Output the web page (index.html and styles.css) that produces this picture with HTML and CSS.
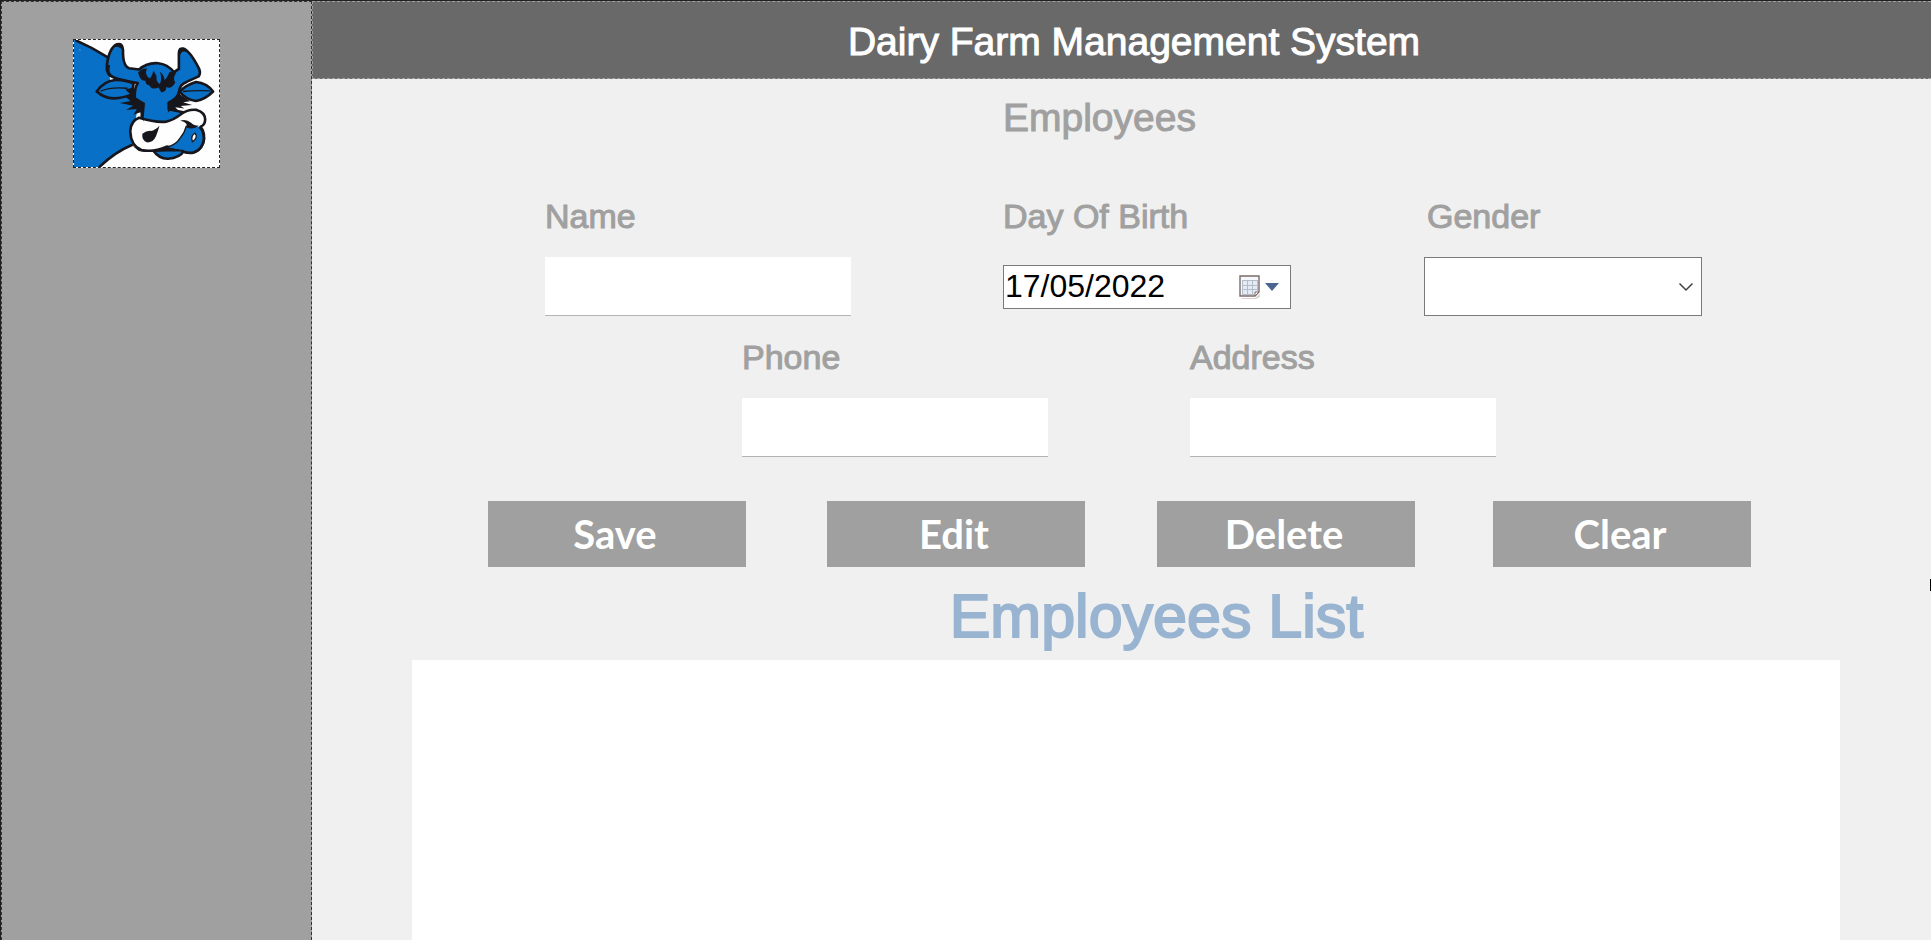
FILE: index.html
```html
<!DOCTYPE html>
<html lang="en">
<head>
<meta charset="utf-8">
<title>Dairy Farm Management System</title>
<link rel="stylesheet" href="styles.css">
</head>
<body>
<div class="app">
  <aside class="sidebar">
    <div class="logo">
      <svg class="logo-art" viewBox="39 27 441 387" preserveAspectRatio="none" role="img" aria-label="Blue cow logo">
        <rect x="39" y="27" width="441" height="387" fill="#fefefe"/>
        <path d="M39 27 L52 30 L140 78 L150 160 L235 215 L215 347 Q170 365 120 414 L39 414Z" fill="#0870c6"/>
        <g stroke="#17161c" stroke-width="8" stroke-linejoin="round" stroke-linecap="round">
          <path d="M46 29 Q95 50 142 80 M215 347 Q165 368 118 412" fill="none"/>
          <path d="M280 364 Q320 362 376 362 Q360 388 325 389 Q298 390 280 364Z" fill="#0870c6"/>
          <path d="M244 280 L247 222 L224 205 Q222 175 233 158 Q185 150 160 141 Q135 132 139 103 Q146 50 170 40 Q187 35 188 57 Q187 108 207 113 L237 117 Q262 95 295 98 Q323 101 343 125 L358 115 Q358 90 358 66 Q359 51 371 53 Q392 60 420 116 Q425 128 418 138 L383 154 Q360 162 359 184 Q355 205 327 218 L327 238 L385 250 Q350 272 310 280Z" fill="#0870c6"/>
          <path d="M108 184 Q130 152 164 149 Q195 148 220 160 L216 192 Q190 204 160 205 Q130 204 108 184Z" fill="#0870c6"/>
          <path d="M360 184 Q380 164 410 155 Q443 158 462 184 Q438 208 410 213 Q380 210 360 184Z" fill="#0870c6"/>
          <path d="M210 305 Q212 273 237 264 Q285 279 319 276 Q341 271 363 254 Q386 237 412 240 Q438 247 438 270 Q437 286 424 291 Q440 313 432 341 Q423 366 398 371 Q377 373 361 360 L321 352 Q280 370 244 362 Q212 350 210 305Z" fill="#fefefe"/>
        </g>
        <path d="M381 288 Q376 309 361 327 Q350 346 322 354 Q352 360 366 364 Q383 374 404 369 Q430 360 434 329 Q434 302 420 292 Q407 286 391 295Z" fill="#0870c6"/>
        <path d="M381 288 Q376 309 361 327 Q350 346 322 354" fill="none" stroke="#17161c" stroke-width="4"/>
        <path d="M366 364 Q383 374 404 369 Q430 360 434 329 Q434 302 420 292" fill="none" stroke="#17161c" stroke-width="8"/>
        <path d="M120 183 Q150 169 202 174 M370 184 Q405 180 454 182" fill="none" stroke="#17161c" stroke-width="4"/>
        <g fill="#17161c">
          <path d="M137 100 L149 105 Q143 124 154 135 L177 145 L146 139 Q135 125 137 100Z"/>
          <path d="M157 51 Q171 35 188 45 L190 62 Q174 40 157 51Z"/>
          <path d="M359 52 Q374 49 381 64 Q366 57 361 75Z"/>
          <path d="M234 126 Q246 113 261 114 Q252 135 270 144 Q278 134 281 121 L290 137 Q288 155 300 161 Q307 148 301 124 Q313 134 314 149 Q322 143 329 125 Q343 118 350 127 Q338 143 347 157 Q334 178 320 170 Q320 184 305 187 L296 172 Q276 181 267 164 Q255 163 257 151 Q240 154 234 126Z"/>
          <path d="M195 178 L222 171 L224 201 L255 219 L250 276 L241 247 L220 255 L230 237 L197 240 L219 227 L178 219 L211 213 L195 200 L212 194Z"/>
          <path d="M353 184 L365 195 L392 214 L371 217 L398 225 L363 228 L375 236 L347 232 L358 244 L336 237 L324 249 L330 214 Q355 207 353 184Z"/>
          <path d="M247 313 Q259 303 273 304 Q286 302 299 288 Q295 303 288 321 Q280 339 262 339 Q244 334 247 313Z"/>
          <path d="M362 273 Q380 267 395 279 Q403 288 419 288 Q400 302 381 294 Q387 277 362 273Z"/>
          <path d="M211 345 Q234 364 265 363 Q301 363 322 353 Q350 361 372 362 L340 366 L322 360 Q270 374 236 365Z"/>
        </g>
        <path d="M399 337 Q393 319 407 311 Q418 324 399 337Z" fill="#fefefe" stroke="#17161c" stroke-width="4"/>
        <circle cx="57" cy="57" r="2" fill="#83c3ef"/>
      </svg>
    </div>
  </aside>

  <div class="content">
    <header class="topbar">
      <h1 class="app-title">Dairy Farm Management System</h1>
    </header>

    <main class="page">
      <form class="employee-form">
        <div class="columns heading-row">
          <h2 class="page-title">Employees</h2>
        </div>
        <div class="columns">
          <div class="field">
            <label for="name">Name</label>
            <input class="text-box" id="name" type="text">
          </div>
          <div class="field field-date">
            <label for="birth">Day Of Birth</label>
            <div class="control-line">
              <div class="date-box">
                <input class="date-text" id="birth" type="text" value="17/05/2022">
                <button class="date-button" type="button" aria-label="Open calendar">
                  <svg width="42" height="26" viewBox="0 0 42 26" aria-hidden="true">
                    <path d="M3 24 H17 L22 20 V23 L18 25 H4Z" fill="#d9d2d0"/>
                    <path d="M2 2 H21 V18 L17 22 H2Z" fill="#f4f7fc" stroke="#7b6c69" stroke-width="1.4"/>
                    <rect x="4" y="6" width="15" height="14" fill="#e4ebf5"/>
                    <path d="M4 6.500 H19 M4 11.500 H19 M4 15.500 H19 M4 20.500 H16 M4.500 6 V20 M9.500 6 V20 M14.500 6 V20 M19.500 6 V17" fill="none" stroke="#b4bdca"/>
                    <path d="M17 22 V18 H21Z" fill="#fff" stroke="#7b6c69"/>
                    <path d="M27 9 H41 L34 17Z" fill="#4a6590"/>
                  </svg>
                </button>
              </div>
            </div>
          </div>
          <div class="field field-gender">
            <label for="gender">Gender</label>
            <div class="select-wrap">
              <select class="select-box" id="gender"><option></option></select>
              <svg class="chevron" width="16" height="10" viewBox="0 0 16 10" aria-hidden="true"><path d="M1.500 1.500 L8 8 L14.500 1.500" fill="none" stroke="#404040" stroke-width="1.500"/></svg>
            </div>
          </div>
        </div>

        <div class="contact-row">
          <div class="field">
            <label for="phone">Phone</label>
            <input class="text-box" id="phone" type="text">
          </div>
          <div class="field">
            <label for="address">Address</label>
            <input class="text-box" id="address" type="text">
          </div>
        </div>

        <div class="actions">
          <button class="action" type="button">Save</button>
          <button class="action" type="button">Edit</button>
          <button class="action" type="button">Delete</button>
          <button class="action" type="button">Clear</button>
        </div>
      </form>

      <h2 class="list-title">Employees List</h2>
      <section class="data-grid" aria-label="Employees List"></section>
      <span class="resize-handle"></span>
    </main>
  </div>
</div>
</body>
</html>
```
FILE: styles.css
```css
* {
  box-sizing: border-box;
}

body {
  margin: 0;
  background: #f0f0f0;
  color: #a0a0a0;
  font-family: "Liberation Sans", Arial, sans-serif;
}

h1,
h2 {
  margin: 0;
  font-weight: 400;
}

.app {
  display: grid;
  grid-template-columns: 311px 1fr;
  min-height: 100vh;
  border-top: 1px solid #221f22;
  border-left: 1px solid #221f22;
}

.sidebar {
  padding: 37px 71px;
  background: #a0a0a0;
  border: 1px dashed #333;
  border-bottom: 0;
}

.logo {
  width: 147px;
  height: 129px;
  border: 1px dashed #222;
  background: #fff;
}

.logo-art {
  display: block;
  width: 100%;
  height: 100%;
}

.content {
  display: flex;
  flex-direction: column;
}

.topbar {
  padding: 18px 0 14px 24px;
  background: #696969;
  border: 1px dashed #a0a0a0;
  border-right: 0;
}

.app-title,
.page-title {
  font-size: 39px;
  line-height: 44px;
  -webkit-text-stroke: 1px currentColor;
}

.app-title {
  color: #fff;
  text-align: center;
}

.page {
  position: relative;
  display: flex;
  flex: 1;
  flex-direction: column;
  padding-top: 17px;
}

.columns {
  display: grid;
  grid-template-columns: 458fr 421fr 278px;
  padding: 0 229px 0 233px;
}

.heading-row {
  margin-bottom: 57px;
}

.page-title {
  grid-column: 2;
}

.field {
  display: flex;
  flex-direction: column;
  gap: 22px;
}

.field label {
  font-size: 34px;
  line-height: 38px;
  -webkit-text-stroke: 1px currentColor;
}

.field-gender label {
  padding-left: 3px;
}

.text-box {
  width: 306px;
  height: 59px;
  padding: 0 8px;
  border: 0;
  border-bottom: 1px solid #b4b4b4;
  background: #fff;
  font: 32px "Liberation Sans", Arial, sans-serif;
}

.control-line {
  display: flex;
  align-items: center;
  height: 59px;
}

.date-box {
  display: flex;
  align-items: center;
  width: 288px;
  height: 44px;
  padding: 0 10px 0 1px;
  border: 1px solid #7a7a7a;
  background: #fff;
}

.date-text {
  flex: 1;
  min-width: 0;
  padding: 0 0 2px;
  border: 0;
  background: transparent;
  color: #000;
  font: 32px/38px "Liberation Sans", Arial, sans-serif;
}

.date-button {
  display: flex;
  padding: 0;
  border: 0;
  background: transparent;
}

.select-wrap {
  position: relative;
  height: 59px;
}

.select-box {
  width: 100%;
  height: 100%;
  padding: 0 40px 0 8px;
  appearance: none;
  border: 1px solid #7a7a7a;
  border-radius: 0;
  background: #fff;
  font: 32px "Liberation Sans", Arial, sans-serif;
}

.chevron {
  position: absolute;
  top: 25px;
  right: 8px;
  pointer-events: none;
}

.contact-row {
  display: grid;
  grid-template-columns: 448fr 306px;
  margin-top: 22px;
  padding: 0 435px 0 430px;
}

.actions {
  display: grid;
  grid-template-columns: 339fr 330fr 336fr 258px;
  margin-top: 44px;
  padding: 0 180px 0 176px;
}

.action {
  width: 258px;
  height: 66px;
  padding: 0 4px 0 0;
  border: 0;
  background: #a0a0a0;
  color: #fff;
  font: 700 40px "Comic Sans MS", Lato, sans-serif;
}

.list-title {
  margin-top: 15px;
  padding-left: 70px;
  color: #99b4d1;
  font-size: 61px;
  line-height: 68px;
  text-align: center;
  -webkit-text-stroke: 2px currentColor;
}

.data-grid {
  flex: 1;
  margin: 10px 91px 0 100px;
  background: #fff;
}

.resize-handle {
  position: absolute;
  top: 500px;
  right: 0;
  width: 1px;
  height: 12px;
  background: #000;
}
```
